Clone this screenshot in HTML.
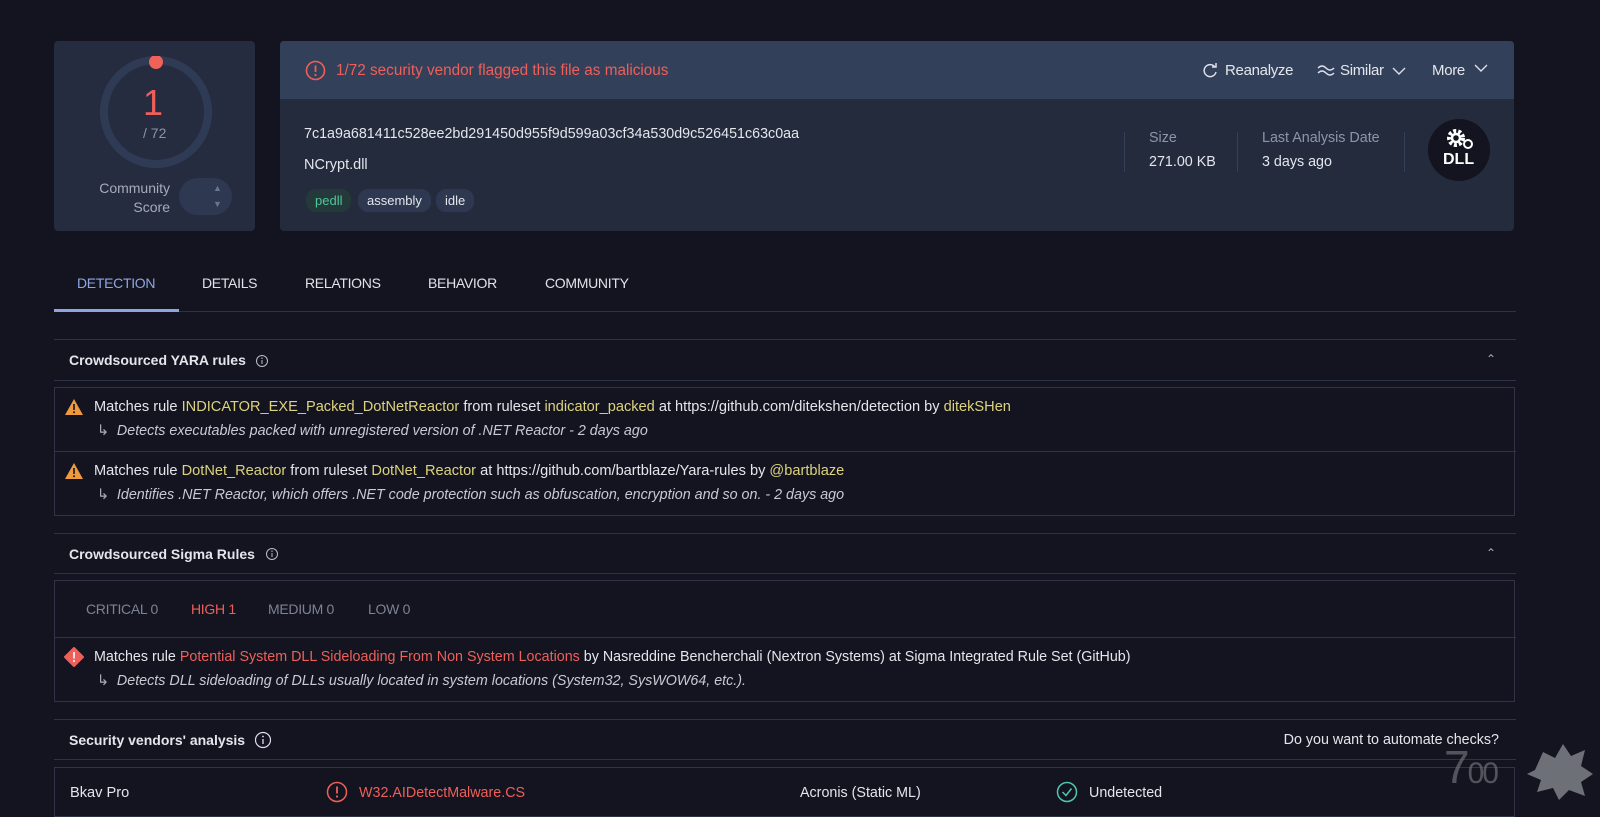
<!DOCTYPE html>
<html><head><meta charset="utf-8"><style>
*{margin:0;padding:0;box-sizing:border-box}
body{width:1600px;height:802px;overflow:hidden;background:#13141f;font-family:"Liberation Sans",sans-serif;color:#e4e6ec;position:relative;font-size:14.6px;letter-spacing:0}
.a{position:absolute;white-space:nowrap}
.y{color:#ddd37e}
.r{color:#ef5f5a}
.it{font-style:italic;color:#c7cad2;font-size:14.3px}
.hl{position:absolute;left:54px;width:1462px;height:1px;background:#2d3344}
.box{position:absolute;left:54px;width:1461px;border:1px solid #2f3547}
.tag{position:absolute;top:189px;height:23px;border-radius:10px;background:#2e3850;font-size:13px;line-height:23px;padding:0 9px;color:#e4e6ec}
.tab{position:absolute;top:275px;font-size:14px;letter-spacing:-0.3px;color:#e0e2ea}
.arr{position:absolute;color:#aab;font-size:12px}
.sh{font-weight:bold;font-size:14px;letter-spacing:0}
</style></head><body>
<div class="a" style="left:54px;top:41px;width:201px;height:190px;background:#252c3f;border-radius:4px"></div>
<svg class="a" style="left:96px;top:56px" width="120" height="120"><circle cx="60" cy="56" r="52" fill="none" stroke="#2f3a55" stroke-width="8"/><circle cx="60" cy="6" r="7" fill="#f0615a"/></svg>
<div class="a r" style="left:143px;top:82px;font-size:36px;letter-spacing:0">1</div>
<div class="a" style="left:143px;top:125px;color:#8d93a6;font-size:14px">/ 72</div>
<div class="a" style="left:80px;top:179px;width:90px;text-align:right;color:#a7acbb;line-height:19px;font-size:14px">Community<br>Score</div>
<div class="a" style="left:179px;top:178px;width:53px;height:37px;border-radius:19px;background:#2e3850"></div>
<div class="a" style="left:213px;top:183px;color:#6b7590;font-size:9px">▲</div>
<div class="a" style="left:213px;top:199px;color:#6b7590;font-size:9px">▼</div>
<div class="a" style="left:280px;top:41px;width:1234px;height:190px;background:#232b3d;border-radius:4px"></div>
<div class="a" style="left:280px;top:41px;width:1234px;height:58px;background:#334059;border-radius:4px 4px 0 0"></div>
<svg class="a" style="left:305px;top:60px" width="21" height="21"><circle cx="10.5" cy="10.5" r="9" fill="none" stroke="#ef5f5a" stroke-width="1.6"/><line x1="10.5" y1="5.5" x2="10.5" y2="12" stroke="#ef5f5a" stroke-width="1.8"/><circle cx="10.5" cy="15" r="1.1" fill="#ef5f5a"/></svg>
<div class="a r" style="left:336px;top:62px;font-size:15.3px">1/72 security vendor flagged this file as malicious</div>
<svg class="a" style="left:1202px;top:63px" width="16" height="16"><path d="M13 4 A6 6 0 1 0 14 9" fill="none" stroke="#dde" stroke-width="1.5"/><path d="M10 3 L14 3 L14 -1" fill="none" stroke="#dde" stroke-width="1.5" transform="translate(0,1)"/></svg>
<div class="a" style="left:1225px;top:62px;font-size:15px;letter-spacing:-0.3px">Reanalyze</div>
<svg class="a" style="left:1317px;top:64px" width="18" height="12"><path d="M1 4 Q5 0 9 4 T17 4 M1 9 Q5 5 9 9 T17 9" fill="none" stroke="#dde" stroke-width="1.4"/></svg>
<div class="a" style="left:1340px;top:62px;font-size:15px;letter-spacing:-0.3px">Similar</div>
<svg class="a" style="left:1392px;top:67px" width="14" height="9"><path d="M1 1 L7 7 L13 1" fill="none" stroke="#dde" stroke-width="1.4"/></svg>
<div class="a" style="left:1432px;top:62px;font-size:15px;letter-spacing:-0.3px">More</div>
<svg class="a" style="left:1474px;top:64px" width="14" height="9"><path d="M1 1 L7 7 L13 1" fill="none" stroke="#dde" stroke-width="1.4"/></svg>
<div class="a" style="left:304px;top:126px;font-size:14.3px">7c1a9a681411c528ee2bd291450d955f9d599a03cf34a530d9c526451c63c0aa</div>
<div class="a" style="left:304px;top:157px;font-size:14.5px">NCrypt.dll</div>
<div class="tag" style="left:306px;color:#4fc79b;background:#243a3a">pedll</div>
<div class="tag" style="left:358px">assembly</div>
<div class="tag" style="left:436px">idle</div>
<div class="a" style="left:1124px;top:132px;width:1px;height:40px;background:#33405a"></div>
<div class="a" style="left:1237px;top:132px;width:1px;height:40px;background:#33405a"></div>
<div class="a" style="left:1404px;top:132px;width:1px;height:40px;background:#33405a"></div>
<div class="a" style="left:1149px;top:130px;color:#8d95ab;font-size:14.3px">Size</div>
<div class="a" style="left:1149px;top:154px;font-size:14.3px">271.00 KB</div>
<div class="a" style="left:1262px;top:130px;color:#8d95ab;font-size:14.3px">Last Analysis Date</div>
<div class="a" style="left:1262px;top:154px;font-size:14.3px">3 days ago</div>
<div class="a" style="left:1428px;top:119px;width:62px;height:62px;border-radius:50%;background:#13141f"></div>
<svg class="a" style="left:1441px;top:126px" width="36" height="26"><circle cx="15" cy="12" r="7" fill="none" stroke="#fff" stroke-width="4" stroke-dasharray="3 2"/><circle cx="15" cy="12" r="4" fill="none" stroke="#fff" stroke-width="2.5"/><circle cx="27" cy="18" r="4" fill="none" stroke="#fff" stroke-width="2"/></svg>
<div class="a" style="left:1443px;top:151px;color:#fff;font-weight:bold;font-size:16px;letter-spacing:0">DLL</div>
<div class="tab" style="left:77px;color:#8ea6e0">DETECTION</div>
<div class="tab" style="left:202px">DETAILS</div>
<div class="tab" style="left:305px">RELATIONS</div>
<div class="tab" style="left:428px">BEHAVIOR</div>
<div class="tab" style="left:545px">COMMUNITY</div>
<div class="hl" style="top:311px;background:#2c3242"></div>
<div class="a" style="left:54px;top:309px;width:125px;height:3px;background:#8ea6e0"></div>
<div class="hl" style="top:339px"></div>
<div class="a sh" style="left:69px;top:352px">Crowdsourced YARA rules</div>
<svg class="a" style="left:255px;top:354px" width="14" height="14"><circle cx="7" cy="7" r="5.5" fill="none" stroke="#bbc" stroke-width="1"/><line x1="7" y1="6" x2="7" y2="10" stroke="#bbc"/><circle cx="7" cy="4.2" r=".7" fill="#bbc"/></svg>
<div class="arr" style="left:1486px;top:352px">⌃</div>
<div class="hl" style="top:380px"></div>
<div class="box" style="top:387px;height:129px"></div>
<div class="hl" style="top:451px;background:#2f3547"></div>
<svg class="a" style="left:64px;top:398px" width="20" height="18"><path d="M10 1 L19 17 L1 17 Z" fill="#f09a3e"/><rect x="9.2" y="6" width="1.6" height="6" fill="#13141f"/><circle cx="10" cy="14.3" r="1" fill="#13141f"/></svg>
<div class="a" style="left:94px;top:399px">Matches rule <span class="y">INDICATOR_EXE_Packed_DotNetReactor</span> from ruleset <span class="y">indicator_packed</span> at https://github.com/ditekshen/detection by <span class="y">ditekSHen</span></div>
<div class="a it" style="left:97px;top:423px"><span style="font-style:normal;color:#aab">↳</span>&nbsp; Detects executables packed with unregistered version of .NET Reactor - 2 days ago</div>
<svg class="a" style="left:64px;top:462px" width="20" height="18"><path d="M10 1 L19 17 L1 17 Z" fill="#f09a3e"/><rect x="9.2" y="6" width="1.6" height="6" fill="#13141f"/><circle cx="10" cy="14.3" r="1" fill="#13141f"/></svg>
<div class="a" style="left:94px;top:463px">Matches rule <span class="y">DotNet_Reactor</span> from ruleset <span class="y">DotNet_Reactor</span> at https://github.com/bartblaze/Yara-rules by <span class="y">@bartblaze</span></div>
<div class="a it" style="left:97px;top:487px"><span style="font-style:normal;color:#aab">↳</span>&nbsp; Identifies .NET Reactor, which offers .NET code protection such as obfuscation, encryption and so on. - 2 days ago</div>
<div class="hl" style="top:533px"></div>
<div class="a sh" style="left:69px;top:546px">Crowdsourced Sigma Rules</div>
<svg class="a" style="left:265px;top:547px" width="14" height="14"><circle cx="7" cy="7" r="5.5" fill="none" stroke="#bbc" stroke-width="1"/><line x1="7" y1="6" x2="7" y2="10" stroke="#bbc"/><circle cx="7" cy="4.2" r=".7" fill="#bbc"/></svg>
<div class="arr" style="left:1486px;top:546px">⌃</div>
<div class="hl" style="top:573px"></div>
<div class="box" style="top:580px;height:122px"></div>
<div class="hl" style="top:637px;background:#2f3547"></div>
<div class="a" style="left:86px;top:601px;color:#7d8294;font-size:14px;letter-spacing:-0.3px">CRITICAL 0</div>
<div class="a r" style="left:191px;top:601px;font-size:14px;letter-spacing:-0.3px">HIGH 1</div>
<div class="a" style="left:268px;top:601px;color:#7d8294;font-size:14px;letter-spacing:-0.3px">MEDIUM 0</div>
<div class="a" style="left:368px;top:601px;color:#7d8294;font-size:14px;letter-spacing:-0.3px">LOW 0</div>
<svg class="a" style="left:64px;top:647px" width="20" height="20"><path d="M10 1 L19 10 L10 19 L1 10 Z" fill="#ef5f5a" stroke="#ef5f5a" stroke-linejoin="round" stroke-width="2"/><rect x="9.2" y="5" width="1.6" height="6.5" fill="#fff"/><circle cx="10" cy="14" r="1" fill="#fff"/></svg>
<div class="a" style="left:94px;top:649px;font-size:14.3px">Matches rule <span class="r">Potential System DLL Sideloading From Non System Locations</span> by Nasreddine Bencherchali (Nextron Systems) at Sigma Integrated Rule Set (GitHub)</div>
<div class="a it" style="left:97px;top:673px"><span style="font-style:normal;color:#aab">↳</span>&nbsp; Detects DLL sideloading of DLLs usually located in system locations (System32, SysWOW64, etc.).</div>
<div class="hl" style="top:719px"></div>
<div class="a sh" style="left:69px;top:732px">Security vendors' analysis</div>
<svg class="a" style="left:254px;top:731px" width="18" height="18"><circle cx="9" cy="9" r="7.5" fill="none" stroke="#dde" stroke-width="1.2"/><line x1="9" y1="8" x2="9" y2="13" stroke="#dde" stroke-width="1.3"/><circle cx="9" cy="5.5" r=".9" fill="#dde"/></svg>
<div class="a" style="right:101px;top:732px;font-size:14.3px">Do you want to automate checks?</div>
<div class="hl" style="top:759px"></div>
<div class="box" style="top:767px;height:50px"></div>
<div class="a" style="left:70px;top:785px">Bkav Pro</div>
<svg class="a" style="left:326px;top:781px" width="22" height="22"><circle cx="11" cy="11" r="9.5" fill="none" stroke="#ef5f5a" stroke-width="1.5"/><line x1="11" y1="5.5" x2="11" y2="12.5" stroke="#ef5f5a" stroke-width="1.8"/><circle cx="11" cy="15.5" r="1.1" fill="#ef5f5a"/></svg>
<div class="a r" style="left:359px;top:785px;font-size:14.3px">W32.AIDetectMalware.CS</div>
<div class="a" style="left:800px;top:785px;font-size:14.3px">Acronis (Static ML)</div>
<svg class="a" style="left:1056px;top:781px" width="22" height="22"><circle cx="11" cy="11" r="9.5" fill="none" stroke="#4fc7b0" stroke-width="1.5"/><path d="M6.5 11 L10 14.5 L15.5 7.5" fill="none" stroke="#4fc7b0" stroke-width="1.5"/></svg>
<div class="a" style="left:1089px;top:785px;font-size:14.3px">Undetected</div>
<div class="a" style="left:1444px;top:740px;font-size:46px;color:#6c6f78;opacity:.7;letter-spacing:-2px">7<span style="font-size:30px">00</span></div>
<svg class="a" style="left:1525px;top:740px" width="70" height="62"><path d="M10 30 L18 12 L30 18 L38 4 L46 16 L60 10 L56 26 L68 34 L56 42 L60 56 L44 50 L34 60 L28 48 L12 52 L16 40 L2 34 Z" fill="#8d8f95" opacity=".75"/></svg>
</body></html>
